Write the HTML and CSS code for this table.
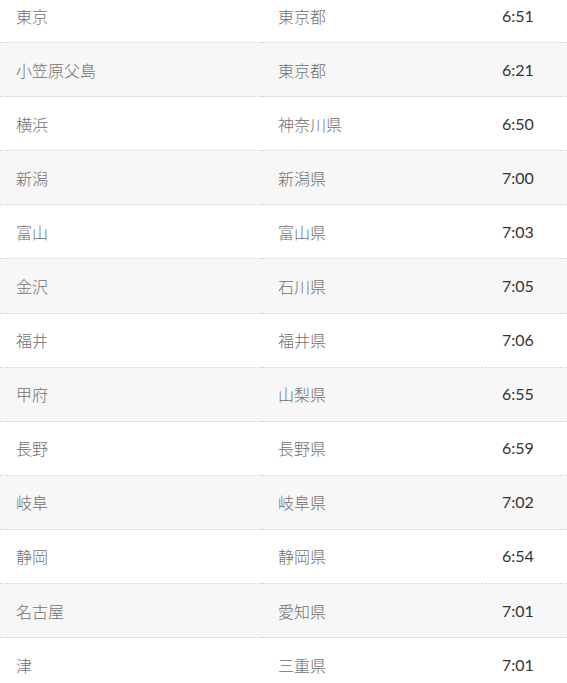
FILE: index.html
```html
<!DOCTYPE html>
<html lang="ja">
<head>
<meta charset="utf-8">
<link rel="stylesheet" href="styles.css">
</head>
<body>
<table class="list">
<tbody>
<tr><td class="city">東京</td><td class="pref">東京都</td><td class="time">6:51</td></tr>
<tr><td class="city">小笠原父島</td><td class="pref">東京都</td><td class="time">6:21</td></tr>
<tr><td class="city">横浜</td><td class="pref">神奈川県</td><td class="time">6:50</td></tr>
<tr><td class="city">新潟</td><td class="pref">新潟県</td><td class="time">7:00</td></tr>
<tr><td class="city">富山</td><td class="pref">富山県</td><td class="time">7:03</td></tr>
<tr><td class="city">金沢</td><td class="pref">石川県</td><td class="time">7:05</td></tr>
<tr><td class="city">福井</td><td class="pref">福井県</td><td class="time">7:06</td></tr>
<tr><td class="city">甲府</td><td class="pref">山梨県</td><td class="time">6:55</td></tr>
<tr><td class="city">長野</td><td class="pref">長野県</td><td class="time">6:59</td></tr>
<tr><td class="city">岐阜</td><td class="pref">岐阜県</td><td class="time">7:02</td></tr>
<tr><td class="city">静岡</td><td class="pref">静岡県</td><td class="time">6:54</td></tr>
<tr><td class="city">名古屋</td><td class="pref">愛知県</td><td class="time">7:01</td></tr>
<tr><td class="city">津</td><td class="pref">三重県</td><td class="time">7:01</td></tr>
</tbody>
</table>
</body>
</html>
```
FILE: styles.css
```css
html, body {
  margin: 0;
  padding: 0;
  background: #fff;
}
body {
  font-family: Lato, "Noto Sans CJK JP", sans-serif;
  font-size: 16px;
  overflow: hidden;
}
.list {
  width: 567px;
  border-collapse: separate;
  border-spacing: 0;
  table-layout: fixed;
  margin-top: -11px;
}
.list tr:nth-child(even) {
  background: #f7f7f7;
}
.list td {
  box-sizing: border-box;
  height: 54.1px;
  padding: 0 16px;
  border-bottom: 1px dotted #d0d0d0;
  vertical-align: middle;
  line-height: 24px;
}
.city {
  width: 262px;
  color: #707070;
  font-family: "Noto Sans CJK JP", sans-serif;
  font-weight: 300;
}
.pref {
  width: 224px;
  color: #707070;
  font-family: "Noto Sans CJK JP", sans-serif;
  font-weight: 300;
}
.time {
  color: #333;
  font-family: Lato, sans-serif;
}
```
